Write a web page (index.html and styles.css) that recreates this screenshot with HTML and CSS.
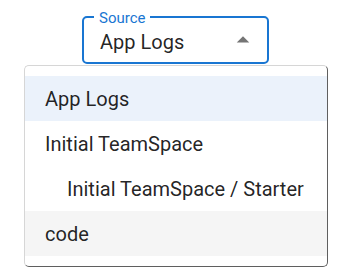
FILE: index.html
```html
<!DOCTYPE html>
<html lang="en">
	<head>
		<meta charset="UTF-8"/>
		<meta name="viewport" content="width=device-width, initial-scale=1.0"/>
		<title>Source</title>
		<link rel="stylesheet" href="styles.css">
	</head>
	<body>
	  <div class="page">
		<div class="select">
		  <span class="select-label">Source</span>
		  <span class="select-value">App Logs</span>
		  <svg class="select-arrow" viewBox="0 0 24 24" width="30" height="30">
			<path d="M7 14l5-5 5 5z" fill="#757575"/>
		  </svg>
		</div>
	  </div>

	  <ul class="menu">
		<li class="item selected">App Logs</li>
		<li class="item">Initial TeamSpace</li>
		<li class="item nested">Initial TeamSpace / Starter</li>
		<li class="item hover">code</li>
	  </ul>
	</body>
</html>
```

FILE: styles.css
```css
* {
  box-sizing: border-box;
}
body {
  margin: 0;
  background: #fff;
  font-family: Roboto, "Liberation Sans", sans-serif;
  color: rgba(0, 0, 0, 0.87);
}
.page {
  padding: 16px 0 0 82px;
}
.select {
  position: relative;
  display: flex;
  align-items: center;
  width: 187px;
  height: 48px;
  padding: 0 9px 0 16px;
  border: 2px solid #1976d2;
  border-radius: 5px;
}
.select-label {
  position: absolute;
  left: 10px;
  top: -9px;
  padding: 0 5px;
  background: #fff;
  color: #1976d2;
  font-size: 15px;
  line-height: 18px;
}
.select-value {
  flex: 1;
  font-size: 20px;
  line-height: 24px;
  padding-top: 3px;
}
.select-arrow {
  display: block;
}
.menu {
  position: absolute;
  left: 24px;
  top: 65px;
  width: 304px;
  margin: 0;
  padding: 10px 0;
  list-style: none;
  background: #fff;
  border: 1px solid #d6d6d6;
  border-right-color: #5f5f5f;
  border-bottom-color: #5f5f5f;
  border-radius: 5px;
}
.item {
  height: 45px;
  padding: 0 20px;
  display: flex;
  align-items: center;
  font-size: 20px;
}
.nested {
  padding-left: 42px;
}
.selected {
  background: #ebf2fb;
}
.hover {
  background: #f5f5f5;
}
```
